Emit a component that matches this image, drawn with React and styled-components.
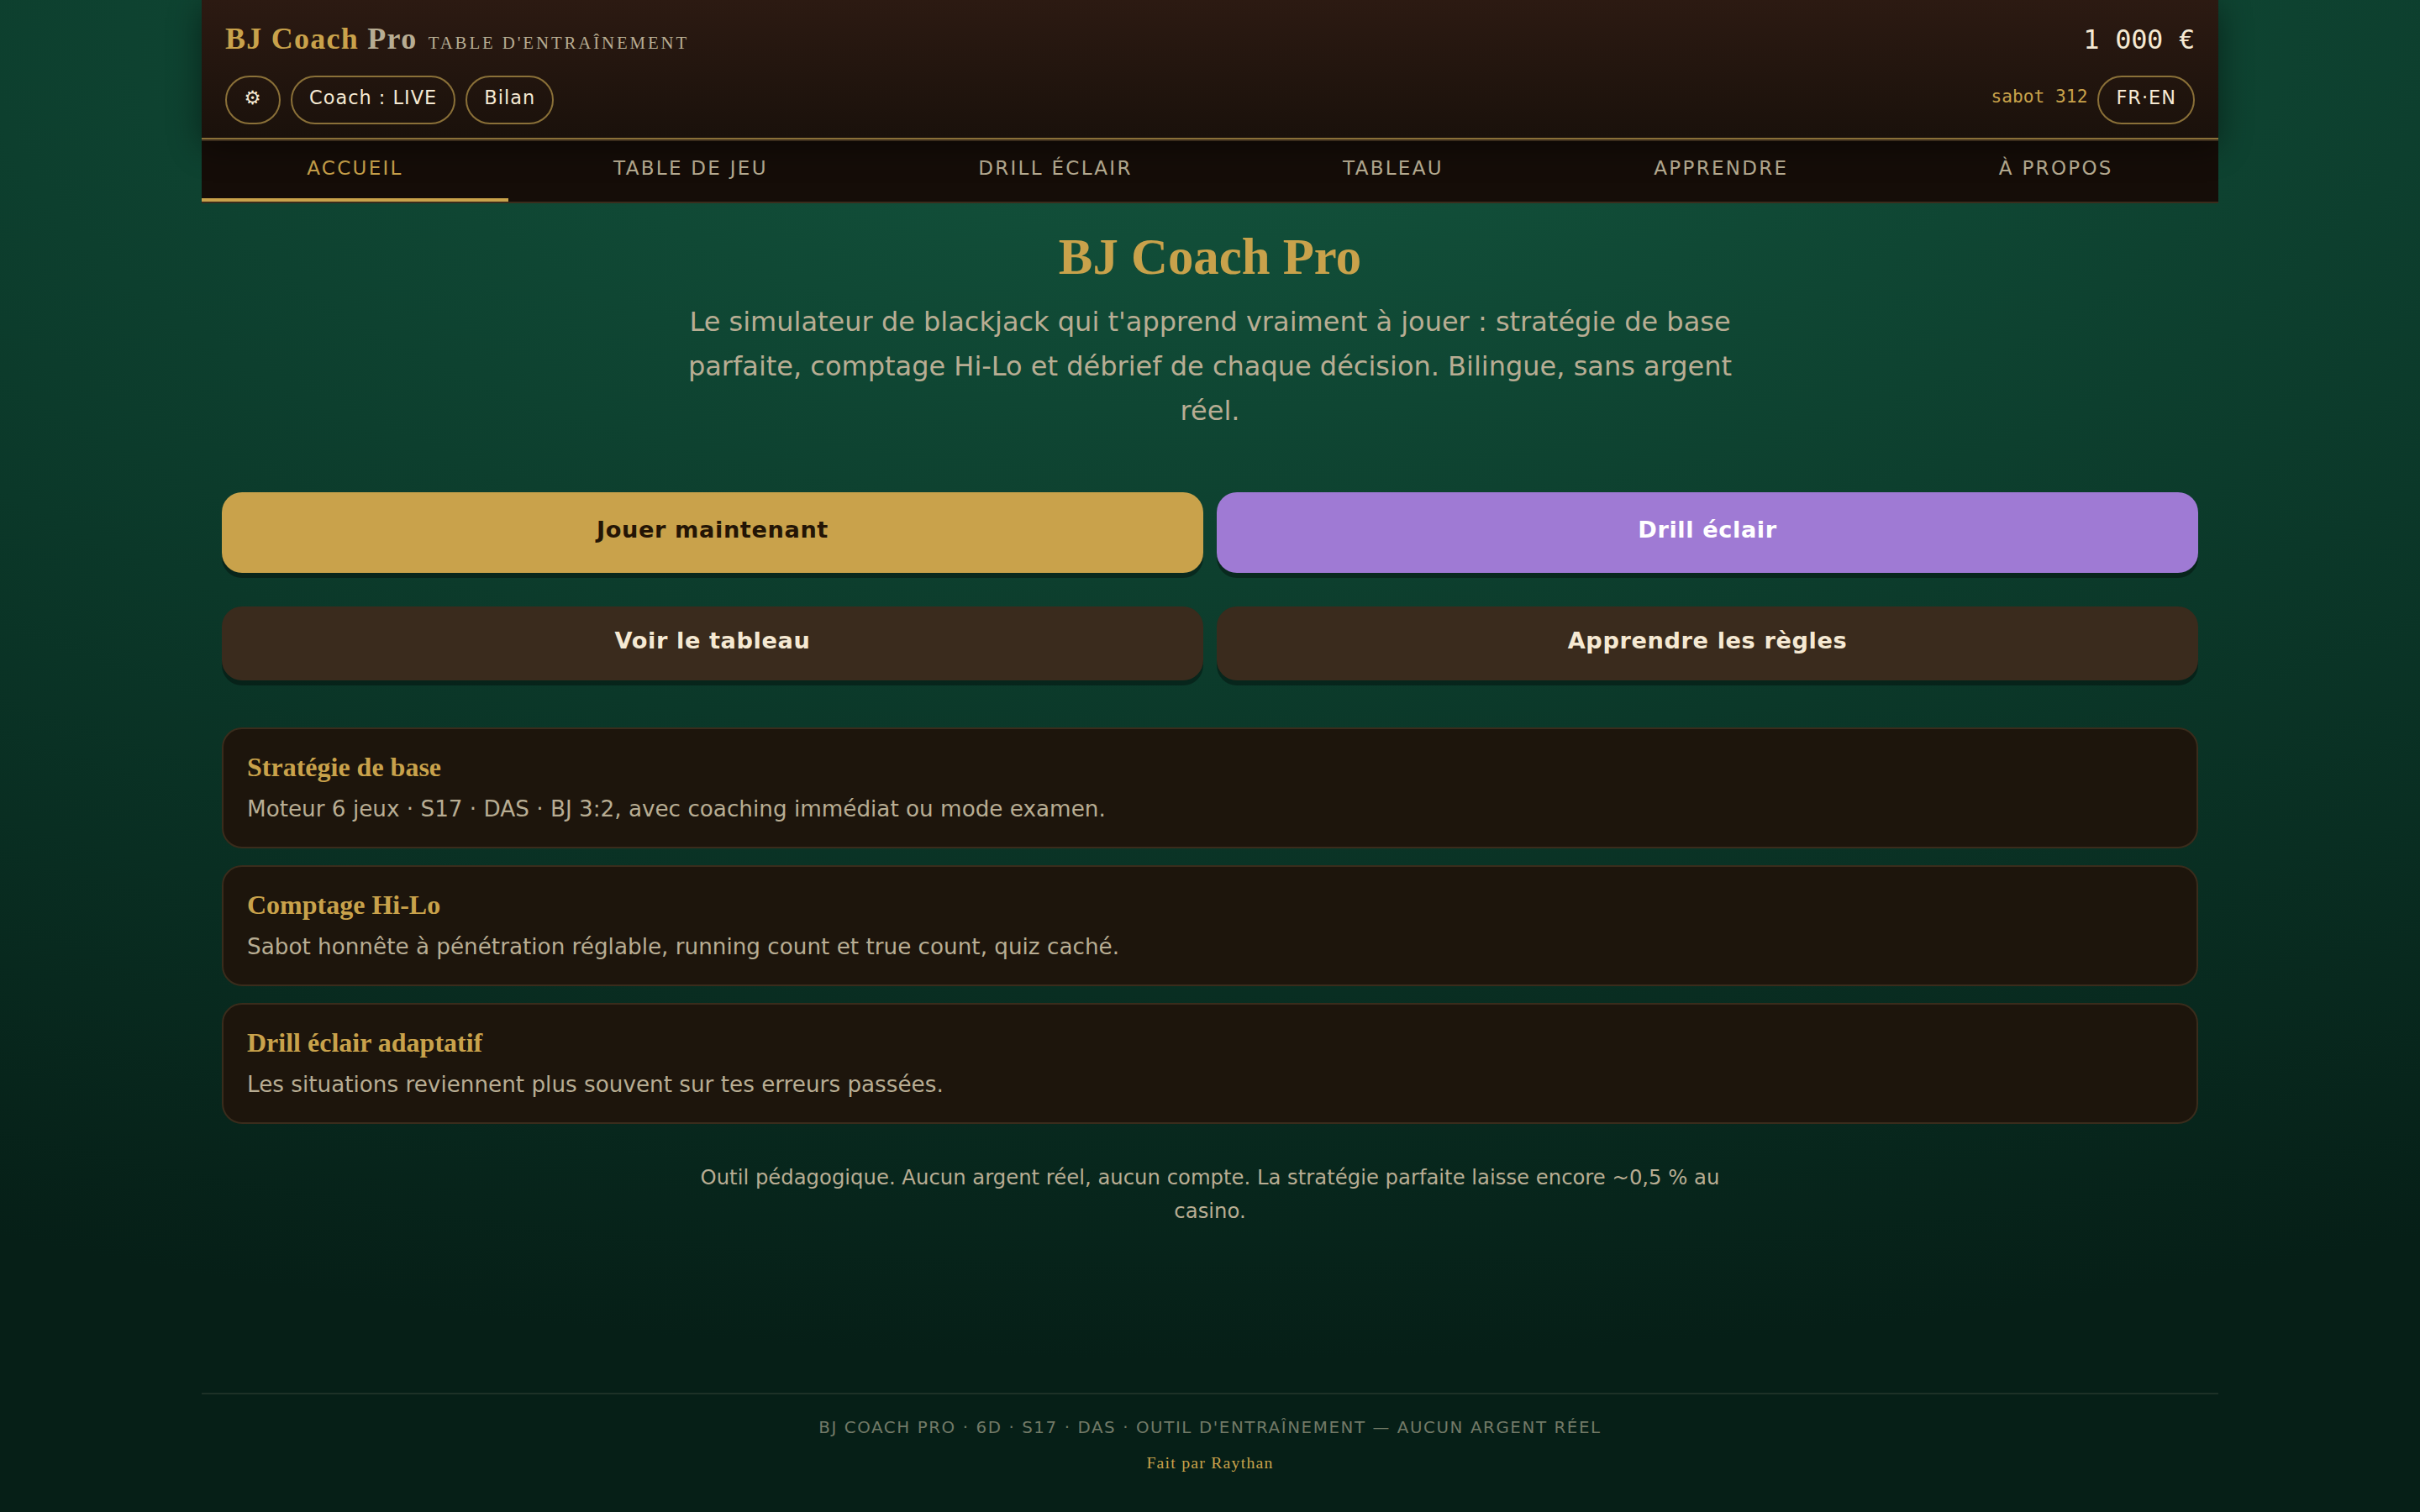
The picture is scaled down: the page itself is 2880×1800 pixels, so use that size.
import styled, { createGlobalStyle } from "styled-components"

const GlobalStyle = createGlobalStyle`
*{
    box-sizing: border-box;
    margin: 0;
    padding: 0;
}
body{
    min-height: 100vh;
    background: radial-gradient(120% 90% at 50% 0%, #14573f 0%, #0b3829 55%, #061f17 100%);
    background-color: #061f17;
    color: #f5e9d3;
    font-family: "DejaVu Sans", sans-serif;
}
`
const Page = styled.div`
width: 2400px;
height: 1800px;
margin: 0 auto;
display: flex;
flex-direction: column;
`
const Header = styled.header`
position: relative;
z-index: 1;
height: 166px;
padding: 26px 28px 0;
background: linear-gradient(180deg, #2c1a12, #1a110b);
border-bottom: 2px solid #8a7038;
box-shadow: 0 2px 0 #3a2c1c, 0 8px 36px rgba(0, 0, 0, 0.45);
`
const HeaderRow = styled.div`
display: flex;
justify-content: space-between;
align-items: ${({ $align }) => $align || "baseline"};
height: ${({ $height }) => $height};
`
const Brand = styled.div`
font-family: "Liberation Serif", serif;
font-size: 36px;
line-height: 40px;
font-weight: bold;
letter-spacing: 0.035em;
color: #c9a24b;
span{
    color: #b8ad93;
}
small{
    margin-left: 3px;
    font-size: 20.8px;
    font-weight: normal;
    letter-spacing: 0.14em;
    color: #b8ad93;
}
`
const Balance = styled.div`
font-family: "DejaVu Sans Mono", monospace;
font-size: 32px;
line-height: 40px;
letter-spacing: -0.3px;
`
const Group = styled.div`
display: flex;
align-items: flex-start;
gap: 12px;
`
const Pill = styled.button`
min-width: 66px;
height: 58px;
padding: 0 20px 6px;
border: 2px solid #8a7038;
border-radius: 40px;
background: transparent;
color: #f5e9d3;
font-family: inherit;
font-size: 22.4px;
letter-spacing: 0.046em;
`
const Shoe = styled.span`
padding-top: 13px;
font-family: "DejaVu Sans Mono", monospace;
font-size: 21.2px;
line-height: 24px;
color: #c9a24b;
`
const Nav = styled.nav`
display: flex;
height: 76px;
background: #150d08;
border-bottom: 2px solid #3a2c1c;
`
const Tab = styled.a`
flex: 1 1 auto;
height: 74px;
padding-top: 20px;
border-bottom: 4px solid ${({ $active }) => ($active ? "#c9a24b" : "transparent")};
color: ${({ $active }) => ($active ? "#c9a24b" : "#b8ad93")};
font-size: 23px;
line-height: 28px;
letter-spacing: 0.1em;
text-align: center;
text-transform: uppercase;
`
const Main = styled.main`
flex: 1;
display: flex;
flex-direction: column;
padding: 28px 24px 0;
`
const Title = styled.h1`
font-family: "Liberation Serif", serif;
font-size: 60.8px;
line-height: 72px;
color: #c9a24b;
text-align: center;
`
const Lead = styled.p`
width: 1280px;
margin: 15px auto 0;
font-size: 32px;
line-height: 53px;
color: #b8ad93;
text-align: center;
`
const Actions = styled.div`
display: grid;
grid-template-columns: 1fr 1fr;
gap: 16px;
margin-top: ${({ $top }) => $top};
`
const colors = {
  gold: ["#c9a24b", "#241505"],
  purple: ["#9f7ad4", "#ffffff"],
  dark: ["#3a2b1d", "#f5e9d3"],
}
const Action = styled.button`
height: ${({ $tall }) => ($tall ? "96px" : "88px")};
padding-bottom: 8px;
border: none;
border-radius: 24px;
background: ${({ $color }) => colors[$color][0]};
color: ${({ $color }) => colors[$color][1]};
box-shadow: 0 6px 0 rgba(0, 0, 0, 0.35);
font-family: inherit;
font-size: 27.2px;
font-weight: bold;
letter-spacing: 0.022em;
`
const Cards = styled.section`
display: flex;
flex-direction: column;
gap: 20px;
margin-top: 56px;
`
const Card = styled.article`
height: 144px;
padding: 25px 28px 0;
border: 2px solid #3a2c1c;
border-radius: 24px;
background: #1d150c;
h3{
    font-family: "Liberation Serif", serif;
    font-size: 32px;
    line-height: 40px;
    color: #c9a24b;
}
p{
    margin-top: 10px;
    font-size: 26.24px;
    line-height: 40px;
    color: #b8ad93;
}
`
const Note = styled.p`
width: 1280px;
margin: 44px auto 0;
font-size: 24.32px;
line-height: 40px;
color: #b8ad93;
text-align: center;
`
const Footer = styled.footer`
height: 142px;
padding-top: 24px;
border-top: 2px solid #1d3127;
text-align: center;
`
const Legal = styled.p`
font-size: 19.84px;
line-height: 32px;
letter-spacing: 0.08em;
text-transform: uppercase;
color: #727a67;
`
const Author = styled.p`
margin-top: 9px;
font-family: "Liberation Serif", serif;
font-size: 19.84px;
line-height: 32px;
letter-spacing: 0.06em;
color: #c9a24b;
`

const tabs = ["Accueil", "Table de jeu", "Drill éclair", "Tableau", "Apprendre", "À propos"]

const features = [
  { title: "Stratégie de base", text: "Moteur 6 jeux · S17 · DAS · BJ 3:2, avec coaching immédiat ou mode examen." },
  { title: "Comptage Hi-Lo", text: "Sabot honnête à pénétration réglable, running count et true count, quiz caché." },
  { title: "Drill éclair adaptatif", text: "Les situations reviennent plus souvent sur tes erreurs passées." },
]

const App = () => {
  return (
    <>
      <GlobalStyle />
      <Page>
        <Header>
          <HeaderRow $height="64px">
            <Brand>
              BJ Coach <span>Pro</span> <small>TABLE D'ENTRAÎNEMENT</small>
            </Brand>
            <Balance>1 000 €</Balance>
          </HeaderRow>
          <HeaderRow $height="58px" $align="flex-start">
            <Group>
              <Pill>⚙</Pill>
              <Pill>Coach : LIVE</Pill>
              <Pill>Bilan</Pill>
            </Group>
            <Group>
              <Shoe>sabot 312</Shoe>
              <Pill>FR·EN</Pill>
            </Group>
          </HeaderRow>
        </Header>
        <Nav>
          {tabs.map((tab, i) => (
            <Tab key={tab} $active={i === 0}>{tab}</Tab>
          ))}
        </Nav>
        <Main>
          <Title>BJ Coach Pro</Title>
          <Lead>
            Le simulateur de blackjack qui t'apprend vraiment à jouer : stratégie de base
            parfaite, comptage Hi-Lo et débrief de chaque décision. Bilingue, sans argent réel.
          </Lead>
          <Actions $top="70px">
            <Action $color="gold" $tall>Jouer maintenant</Action>
            <Action $color="purple" $tall>Drill éclair</Action>
          </Actions>
          <Actions $top="40px">
            <Action $color="dark">Voir le tableau</Action>
            <Action $color="dark">Apprendre les règles</Action>
          </Actions>
          <Cards>
            {features.map(({ title, text }) => (
              <Card key={title}>
                <h3>{title}</h3>
                <p>{text}</p>
              </Card>
            ))}
          </Cards>
          <Note>
            Outil pédagogique. Aucun argent réel, aucun compte. La stratégie parfaite laisse
            encore ~0,5 % au casino.
          </Note>
        </Main>
        <Footer>
          <Legal>BJ Coach Pro · 6D · S17 · DAS · Outil d'entraînement — aucun argent réel</Legal>
          <Author>Fait par Raythan</Author>
        </Footer>
      </Page>
    </>
  )
}

export default App
